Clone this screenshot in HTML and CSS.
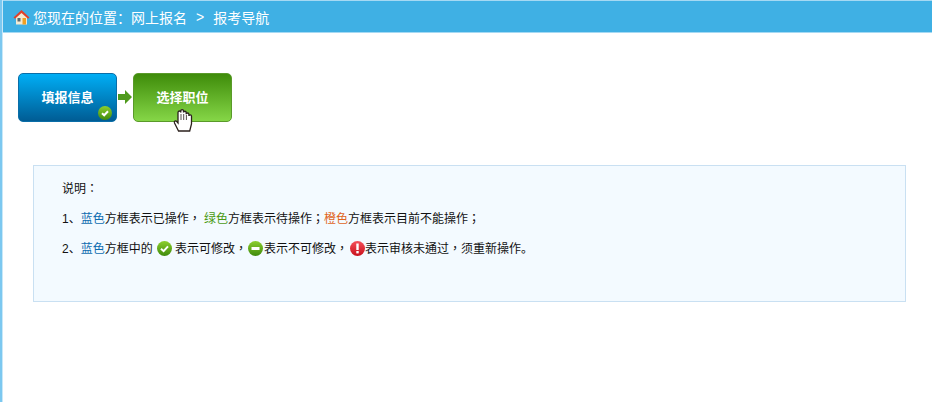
FILE: index.html
```html
<!DOCTYPE html>
<html lang="zh-CN">
<head>
<meta charset="UTF-8">
<title>报考导航</title>
<link rel="stylesheet" href="styles.css">
</head>
<body>
<div class="page">
  <div class="header-bar">
    <svg class="home-icon" width="17" height="16" viewBox="0 0 17 16">
      <path d="M3 8v7.500h11V8L8.500 2.500z" fill="#f4ead2"/>
      <rect x="9.500" y="9" width="3.500" height="6.500" fill="#f0a020"/>
      <rect x="4.500" y="9" width="3" height="3.500" fill="#5a6a70"/>
      <path d="M0.500 8.500 8.500 1l8 7.500-1.500 1.200L8.500 4 2 9.700z" fill="#e0402a"/>
    </svg>
    <span>您现在的位置：网上报名</span>
    <span class="sep">&gt;</span>
    <span>报考导航</span>
  </div>

  <div class="steps">
    <div class="step step-blue">
      填报信息
      <svg class="step-badge" width="14" height="14" viewBox="0 0 14 14">
        <defs>
          <linearGradient id="badgeGreen" x1="0" y1="0" x2="0" y2="1">
            <stop offset="0" stop-color="#8ccf2e"/>
            <stop offset="1" stop-color="#3f8a0c"/>
          </linearGradient>
          <linearGradient id="badgeRed" x1="0" y1="0" x2="0" y2="1">
            <stop offset="0" stop-color="#f4505a"/>
            <stop offset="1" stop-color="#c8101c"/>
          </linearGradient>
        </defs>
        <circle cx="7" cy="7" r="7" fill="url(#badgeGreen)"/>
        <path d="M4 7.200 6.200 9.300 10 5.200" fill="none" stroke="#fff" stroke-width="2"/>
      </svg>
    </div>
    <svg class="step-arrow" width="15" height="14" viewBox="0 0 15 14">
      <path d="M0 4h7V0l7 7-7 7v-4H0z" fill="#4f9a1c"/>
    </svg>
    <div class="step step-green">
      选择职位
      <svg class="hand" width="21" height="24" viewBox="0 0 21 24">
        <path d="M5.500 23 1.500 15c-.8-1.700 1.200-2.800 2.300-1.400L5 15V4.500c0-2 2.800-2 2.800 0V3c0-1.800 2.700-1.800 2.700 0v1.500c0-1.700 2.700-1.700 2.700 0v1.700c0-1.600 2.700-1.600 2.700 0v1.800c0-1.400 2.600-1.400 2.600 .2V16l-1.800 7z" fill="#fff" stroke="#2b211c" stroke-width="1.300"/>
        <path d="M8 6v6M10.700 6v6M13.400 7v5" stroke="#2b211c" stroke-width=".8" fill="none"/>
      </svg>
    </div>
  </div>

  <div class="notice" lang="zh-TW">
    <p>说明：</p>
    <p><span lang="zh-CN">1、</span><span class="c-blue">蓝色</span>方框表示已操作， <span class="c-green">绿色</span>方框表示待操作；<span class="c-orange">橙色</span>方框表示目前不能操作；</p>
    <p><span lang="zh-CN">2、</span><span class="c-blue">蓝色</span>方框中的 <svg class="tip-icon tip-ok" width="15" height="15" viewBox="0 0 15 15">
        <circle cx="7.500" cy="7.500" r="7.500" fill="url(#badgeGreen)"/>
        <path d="M4 7.800 6.600 10.200 11 5.400" fill="none" stroke="#fff" stroke-width="2"/>
      </svg>表示可修改，<svg class="tip-icon tip-lock" width="15" height="15" viewBox="0 0 15 15">
        <circle cx="7.500" cy="7.500" r="7.500" fill="url(#badgeGreen)"/>
        <rect x="3.500" y="6" width="8" height="3" fill="#fff"/>
      </svg>表示不可修改，<svg class="tip-icon tip-error" width="15" height="15" viewBox="0 0 15 15">
        <circle cx="7.500" cy="7.500" r="7.500" fill="url(#badgeRed)"/>
        <rect x="6.300" y="2.500" width="2.400" height="6.500" fill="#fff"/>
        <rect x="6.300" y="10" width="2.400" height="2.400" fill="#fff"/>
      </svg>表示审核未通过，须重新操作<span lang="zh-CN">。</span></p>
  </div>
</div>
</body>
</html>
```
FILE: styles.css
```css
html, body {
  margin: 0;
  padding: 0;
  height: 100%;
  background-color: #ffffff;
  overflow: hidden;
}

.page {
  box-sizing: border-box;
  height: 100%;
  border-left: 2px solid #7cc8f0;
  padding: 1px 0 0 1px;
  box-shadow: inset 1px 0 0 #c8e8f8;
  font-family: "Liberation Sans", "Noto Sans CJK SC", sans-serif;
  color: #111111;
}

.header-bar {
  display: flex;
  align-items: center;
  height: 31px;
  padding-left: 10px;
  background-color: #3fb0e4;
  border-top: 1px solid #a5d9f3;
  margin-top: -1px;
  border-bottom: 1px solid #a5d9f3;
  color: #ffffff;
  font-size: 14px;
}

.home-icon {
  margin-right: 3px;
}

.header-bar .sep {
  margin: 0 9px 0 9px;
}

.steps {
  display: flex;
  align-items: center;
  margin: 40px 0 0 15px;
}

.step {
  position: relative;
  display: flex;
  align-items: center;
  justify-content: center;
  box-sizing: border-box;
  width: 99px;
  height: 49px;
  padding-bottom: 2px;
  border-radius: 5px;
  color: #ffffff;
  font-size: 13px;
  font-weight: bold;
}

.step-blue {
  background: linear-gradient(#00aef5, #005c94);
  border: 1px solid #0a6ea8;
}

.step-green {
  background: linear-gradient(#3f8c0a, #85d647);
  border: 1px solid #5a9a2a;
}

.step-arrow {
  margin: 0 0 2px 1px;
}

.step-badge {
  position: absolute;
  right: 4px;
  bottom: 1px;
}

.hand {
  position: absolute;
  left: 39px;
  bottom: -11px;
}

.notice {
  box-sizing: border-box;
  height: 137px;
  margin: 43px 26px 0 30px;
  padding: 14px 28px;
  background-color: #f3faff;
  border: 1px solid #c9e0f2;
  font-family: "Liberation Sans", "Noto Sans CJK TC", sans-serif;
  font-size: 12px;
}

.notice p {
  margin: 0 0 12px;
  line-height: 18px;
}

.tip-icon {
  vertical-align: -3px;
}

.tip-ok {
  margin: 0 3px 0 1px;
}

.tip-lock {
  margin: 0 1px;
}

.tip-error {
  margin-left: 2px;
}

.c-blue {
  color: #0d6cb0;
}

.c-green {
  color: #4b9a14;
}

.c-orange {
  color: #e0641c;
}
```
